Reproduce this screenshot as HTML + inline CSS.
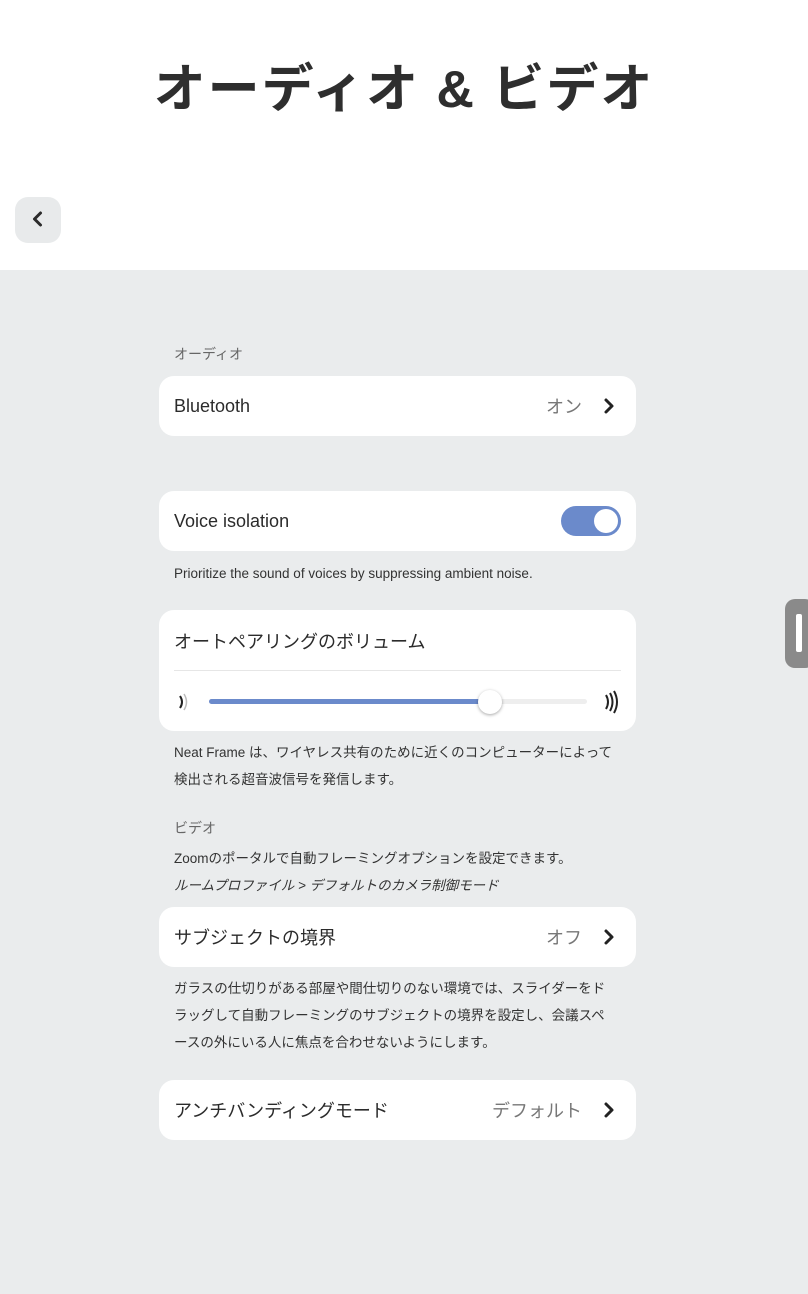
<!DOCTYPE html>
<html><head><meta charset="utf-8"><style>
*{margin:0;padding:0;box-sizing:border-box}
body{width:808px;height:1294px;background:#eaeced;font-family:"Liberation Sans","Noto Sans CJK JP",sans-serif;color:#2b2b2b;position:relative;overflow:hidden}
.top{position:absolute;left:0;top:0;width:808px;height:270px;background:#fff}
.title{position:absolute;top:47px;left:0;width:808px;text-align:center;font-size:52px;font-weight:bold;color:#2e2e2e;letter-spacing:2px}
.back{position:absolute;left:15px;top:197px;width:46px;height:46px;border-radius:13px;background:#e8eaeb}
.a{position:absolute}
.card{position:absolute;left:159px;width:477px;background:#fff;border-radius:15px}
.row{height:60px;display:flex;align-items:center;padding:0 15px;font-size:18px}
.row .v{margin-left:auto;color:#777;margin-right:20px}
.row svg.ch{margin-right:5px}
.lbl{position:absolute;left:174px;font-size:14px;color:#666}
.txt{position:absolute;left:174px;font-size:13.5px;color:#333;line-height:27px}
</style></head><body>
<div class="top"></div>
<div class="title">オーディオ &amp; ビデオ</div>
<div class="back"><svg width="46" height="46"><path d="M25.5 16 L19.5 22 L25.5 28" fill="none" stroke="#2b2b2b" stroke-width="3" stroke-linecap="round" stroke-linejoin="round"/></svg></div>

<div class="lbl" style="top:344px">オーディオ</div>
<div class="card row" style="top:376px">Bluetooth<span class="v">オン</span><svg class="ch" width="14" height="18"><path d="M4 3 L10 9 L4 15" fill="none" stroke="#222" stroke-width="3" stroke-linecap="round" stroke-linejoin="round"/></svg></div>

<div class="card row" style="top:491px">Voice isolation<div style="margin-left:auto;width:60px;height:30px;border-radius:15px;background:#6b8acb;position:relative"><div style="position:absolute;right:3px;top:3px;width:24px;height:24px;border-radius:50%;background:#fff"></div></div></div>
<div class="txt" style="top:560px">Prioritize the sound of voices by suppressing ambient noise.</div>

<div class="card" style="top:610px;height:121px">
<div style="position:absolute;left:15px;top:18px;font-size:18px">オートペアリングのボリューム</div>
<div style="position:absolute;left:15px;right:15px;top:60px;height:1px;background:#e6e6e6"></div>
<svg style="position:absolute;left:18px;top:82px" width="16" height="20"><path d="M3 4 Q7 10 3 16" fill="none" stroke="#222" stroke-width="2"/><path d="M7 2 Q12 10 7 18" fill="none" stroke="#bbb" stroke-width="1.5"/></svg>
<div style="position:absolute;left:50px;top:89px;width:378px;height:5px;border-radius:3px;background:#eeeeee"></div>
<div style="position:absolute;left:50px;top:89px;width:281px;height:5px;border-radius:3px;background:#6b8acb"></div>
<div style="position:absolute;left:319px;top:80px;width:24px;height:24px;border-radius:50%;background:#fff;box-shadow:0 1px 3px rgba(0,0,0,.35)"></div>
<svg style="position:absolute;left:444px;top:80px" width="18" height="24"><path d="M3 5 Q7 12 3 19" fill="none" stroke="#222" stroke-width="2"/><path d="M7 3 Q12 12 7 21" fill="none" stroke="#222" stroke-width="2"/><path d="M11 1 Q17 12 11 23" fill="none" stroke="#222" stroke-width="2"/></svg>
</div>
<div class="txt" style="top:739px">Neat Frame は、ワイヤレス共有のために近くのコンピューターによって<br>検出される超音波信号を発信します。</div>

<div class="lbl" style="top:818px">ビデオ</div>
<div class="txt" style="top:845px">Zoomのポータルで自動フレーミングオプションを設定できます。<br><i>ルームプロファイル &gt; デフォルトのカメラ制御モード</i></div>
<div class="card row" style="top:907px">サブジェクトの境界<span class="v">オフ</span><svg class="ch" width="14" height="18"><path d="M4 3 L10 9 L4 15" fill="none" stroke="#222" stroke-width="3" stroke-linecap="round" stroke-linejoin="round"/></svg></div>
<div class="txt" style="top:975px">ガラスの仕切りがある部屋や間仕切りのない環境では、スライダーをド<br>ラッグして自動フレーミングのサブジェクトの境界を設定し、会議スペ<br>ースの外にいる人に焦点を合わせないようにします。</div>
<div class="card row" style="top:1080px">アンチバンディングモード<span class="v">デフォルト</span><svg class="ch" width="14" height="18"><path d="M4 3 L10 9 L4 15" fill="none" stroke="#222" stroke-width="3" stroke-linecap="round" stroke-linejoin="round"/></svg></div>

<div class="a" style="left:785px;top:599px;width:30px;height:69px;border-radius:10px;background:#8a8a8a"><div style="position:absolute;left:11px;top:15px;width:6px;height:38px;border-radius:2px;background:#fff"></div></div>
</body></html>
